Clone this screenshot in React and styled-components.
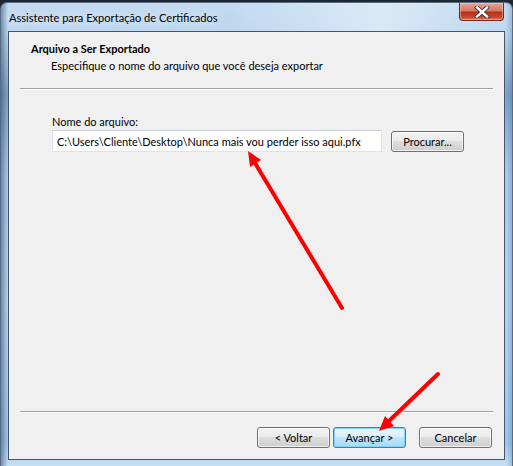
import React from "react";
import styled, { createGlobalStyle } from "styled-components";

const GlobalStyle = createGlobalStyle`
  html, body {
    margin: 0;
    padding: 0;
    background: #1d2733;
  }
  #root {
    width: 513px;
    height: 466px;
    overflow: hidden;
  }
`;

const font = `Lato, "Noto Sans", "Liberation Sans", sans-serif`;

const Window = styled.div`
  position: relative;
  box-sizing: border-box;
  width: 513px;
  height: 464px;
  margin-top: 2px;
  display: flex;
  flex-direction: column;
  padding: 0 7px 6px 7px;
  border-radius: 7px 7px 0 0;
  border: 1px solid #5a6b80;
  border-bottom: none;
  background:
    linear-gradient(90deg, rgba(30, 70, 110, 0.5) 0px, rgba(30, 70, 110, 0) 7px, rgba(0,0,0,0) 505px, rgba(40, 80, 120, 0.3) 513px),
    linear-gradient(180deg, #c4dbf1 0px, #bdd6ef 30px, #7ea3c8 90px, #a9cdef 170px, #b6d6f3 300px, #9ec8ef 440px, #c8e0f5 464px);
  font-family: ${font};
`;

const TitleBar = styled.div`
  height: 28px;
  display: flex;
  align-items: flex-start;
  justify-content: space-between;
  background: linear-gradient(90deg, rgba(255,255,255,0) 0%, rgba(255,255,255,0) 45%, rgba(235,244,252,0.6) 75%, rgba(255,255,255,0) 100%);
`;

const Title = styled.div`
  padding: 7px 0 0 1px;
  font-size: 11.1px;
  line-height: 15px;
  color: #000;
  text-shadow: 0 0 8px rgba(255, 255, 255, 0.9);
  white-space: nowrap;
`;

const CloseButton = styled.div`
  width: 45px;
  height: 18px;
  margin-top: 0px;
  margin-right: 1px;
  box-sizing: border-box;
  border: 1px solid #6b2a22;
  border-top: none;
  border-radius: 0 0 4px 4px;
  background: linear-gradient(180deg, #e8a493 0%, #d27a66 45%, #b8301c 55%, #c94a2f 85%, #e07a5c 100%);
  box-shadow: inset 0 0 0 1px rgba(255, 220, 210, 0.45);
  display: flex;
  align-items: center;
  justify-content: center;
`;

const Client = styled.div`
  flex: 1;
  display: flex;
  flex-direction: column;
  box-sizing: border-box;
  border: 1px solid #45566a;
  background: #f0f0f0;
  font-size: 11px;
  color: #000;
`;

const Header = styled.div`
  padding: 9px 11px 0 22px;
`;

const HeaderTitle = styled.div`
  font-weight: bold;
  line-height: 15px;
`;

const HeaderSub = styled.div`
  margin-top: 2px;
  padding-left: 20px;
  line-height: 15px;
`;

const Separator = styled.div`
  height: 1px;
  margin: ${(p) => p.$top || 0}px 11px 0 11px;
  background: #a0a0a0;
  border-bottom: 1px solid #ffffff;
`;

const Body = styled.div`
  flex: 1;
  padding: 24px 0 0 43px;
`;

const Label = styled.div`
  line-height: 15px;
  margin-bottom: 1px;
`;

const FieldRow = styled.div`
  display: flex;
  align-items: flex-start;
  gap: 9px;
`;

const TextBox = styled.div`
  box-sizing: border-box;
  width: 330px;
  height: 22px;
  padding: 0 0 0 4px;
  display: flex;
  align-items: center;
  background: #ffffff;
  border: 1px solid #dfe4ea;
  border-top-color: #c9d0d8;
  white-space: nowrap;
  overflow: hidden;
`;

const Button = styled.div`
  box-sizing: border-box;
  width: ${(p) => p.$w || 73}px;
  height: 21px;
  margin-top: ${(p) => p.$mt || 0}px;
  display: flex;
  align-items: center;
  justify-content: center;
  border-radius: 3px;
  border: 1px solid ${(p) => (p.$default ? "#3c7fb1" : "#707070")};
  background: ${(p) =>
    p.$default
      ? "linear-gradient(180deg, #eaf6fd 0%, #d9f0fc 45%, #bee6fd 50%, #a7d9f5 100%)"
      : "linear-gradient(180deg, #f2f2f2 0%, #ebebeb 45%, #dddddd 50%, #cfcfcf 100%)"};
  box-shadow: inset 0 0 0 1px ${(p) => (p.$default ? "rgba(120, 210, 250, 0.9)" : "rgba(255, 255, 255, 0.7)")};
  white-space: nowrap;
`;

const Footer = styled.div`
  display: flex;
  flex-direction: column;
`;

const ButtonRow = styled.div`
  display: flex;
  justify-content: flex-end;
  padding: 14px 12px 11px 0;
`;

const ButtonGroup = styled.div`
  display: flex;
  gap: 3px;
  margin-right: 13px;
`;

const Arrows = styled.svg`
  position: absolute;
  left: 0;
  top: -2px;
  width: 513px;
  height: 466px;
  pointer-events: none;
`;

export default function App() {
  return (
    <>
      <GlobalStyle />
      <Window>
        <TitleBar>
          <Title>Assistente para Exportação de Certificados</Title>
          <CloseButton>
            <svg width="16" height="12" viewBox="0 0 16 12">
              <path
                d="M3 1.5 L13 10.5 M13 1.5 L3 10.5"
                stroke="#3b3b3b"
                strokeWidth="4.2"
                strokeLinecap="square"
              />
              <path
                d="M3 1.5 L13 10.5 M13 1.5 L3 10.5"
                stroke="#ffffff"
                strokeWidth="2.4"
                strokeLinecap="square"
              />
            </svg>
          </CloseButton>
        </TitleBar>
        <Client>
          <Header>
            <HeaderTitle>Arquivo a Ser Exportado</HeaderTitle>
            <HeaderSub>Especifique o nome do arquivo que você deseja exportar</HeaderSub>
          </Header>
          <Separator $top={15} />
          <Body>
            <Label>Nome do arquivo:</Label>
            <FieldRow>
              <TextBox>C:\Users\Cliente\Desktop\Nunca mais vou perder isso aqui.pfx</TextBox>
              <Button $w={73} $mt={1}>Procurar...</Button>
            </FieldRow>
          </Body>
          <Footer>
            <Separator />
            <ButtonRow>
              <ButtonGroup>
                <Button>&lt; Voltar</Button>
                <Button $default>Avançar &gt;</Button>
              </ButtonGroup>
              <Button>Cancelar</Button>
            </ButtonRow>
          </Footer>
        </Client>
        <Arrows viewBox="0 0 513 466">
          <line x1="341" y1="307" x2="254" y2="162" stroke="#ff0000" strokeWidth="4" strokeLinecap="round" />
          <polygon points="247,150 260,159 249,166" fill="#ff0000" />
          <line x1="437" y1="373" x2="388" y2="420" stroke="#ff0000" strokeWidth="4" strokeLinecap="round" />
          <polygon points="378,430 393,425 384,415" fill="#ff0000" />
        </Arrows>
      </Window>
    </>
  );
}
